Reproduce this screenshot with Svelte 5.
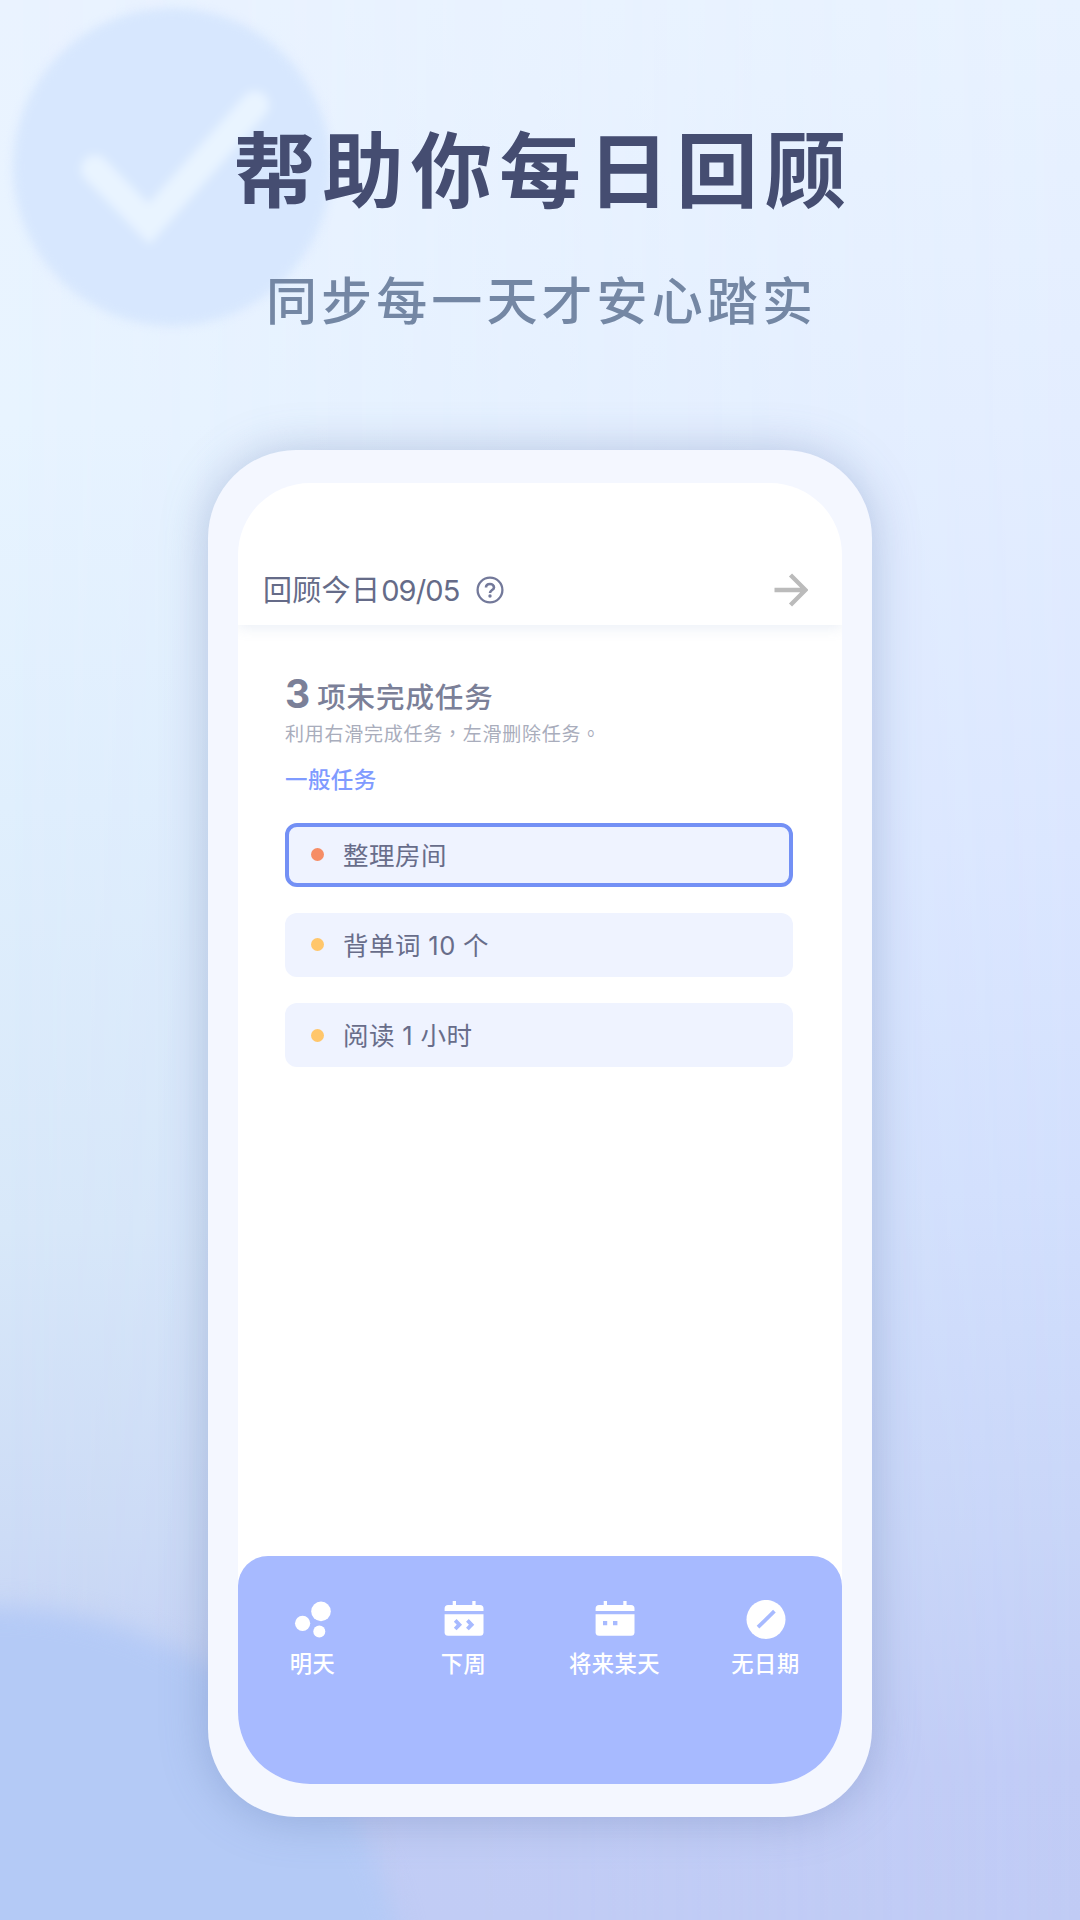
<script lang="ts">
  type Task = { title: string; color: string; active: boolean };

  const tasks: Task[] = [
    { title: "整理房间", color: "#f68d66", active: true },
    { title: "背单词 10 个", color: "#ffc66b", active: false },
    { title: "阅读 1 小时", color: "#ffc66b", active: false },
  ];

  const actions = [
    { icon: "tomorrow", label: "明天" },
    { icon: "week", label: "下周" },
    { icon: "someday", label: "将来某天" },
    { icon: "none", label: "无日期" },
  ];
</script>

<div class="page">
  <svg class="backdrop" viewBox="0 0 1080 1920" aria-hidden="true">
    <g class="badge">
      <circle cx="172" cy="167" r="159" fill="#d7e7fe" />
      <path d="M95 169L149 224L255 105" fill="none" stroke="#e9f4ff" stroke-width="28" stroke-linecap="round" />
    </g>
    <circle class="bubble" cx="-6" cy="2022" r="415" />
  </svg>

  <header class="hero">
    <h1>帮助你每日回顾</h1>
    <p>同步每一天才安心踏实</p>
  </header>

  <div class="phone">
    <div class="screen">
      <div class="topbar">
        <span class="today">回顾今日<span class="date">09/05</span></span>
        <svg class="help" viewBox="0 0 28 28">
          <circle cx="14" cy="14" r="12.4" fill="none" stroke="currentColor" stroke-width="2.3" />
          <path d="M10 11.6C10 9.3 11.8 8 14 8S18 9.4 18 11.4C18 14 14 14 14 17" fill="none" stroke="currentColor" stroke-width="2.6" />
          <circle cx="14" cy="20" r="1.7" fill="currentColor" />
        </svg>
        <svg class="next" viewBox="0 0 34 34">
          <path d="M0.5 17H30M16.5 2L31.5 17L16.5 32" fill="none" stroke="#bbbbbb" stroke-width="4.4" />
        </svg>
      </div>

      <main class="content">
        <h2><b>3</b><span>项未完成任务</span></h2>
        <p class="hint">利用右滑完成任务<i lang="zh-Hant">，</i>左滑删除任务<i lang="zh-Hant">。</i></p>
        <h3>一般任务</h3>
        <ul>
          {#each tasks as task}
            <li class:active={task.active}>
              <span class="dot" style="background: {task.color}"></span>
              <span class="title">{task.title}</span>
            </li>
          {/each}
        </ul>
      </main>

      <nav>
        {#each actions as action}
          <div class="action">
            <svg viewBox="0 0 40 40">
              {#if action.icon === "tomorrow"}
                <circle cx="28" cy="11.4" r="9.8" />
                <circle cx="9.6" cy="23.3" r="7.6" />
                <circle cx="26.3" cy="31.5" r="6" />
              {:else if action.icon === "none"}
                <circle cx="20" cy="19.4" r="19.5" />
                <path class="cut" d="M12 27.2L28.4 11.2" />
              {:else}
                <path d="M0.6 11V8.5Q0.6 5 4.1 5H8.7V1H12V5H28.3V1H31.6V5H36Q39.5 5 39.5 8.5V11Z" />
                <path d="M0.6 14.3H39.5V32.2Q39.5 35.7 36 35.7H4.1Q0.6 35.7 0.6 32.2Z" />
                {#if action.icon === "week"}
                  <path class="cut thin" d="M11.2 20.4L15.4 24.7L11.2 29M23.4 20.4L27.6 24.7L23.4 29" />
                {:else}
                  <path class="hole" d="M8 21H12.2V25.2H8ZM18 21H22.4V25.2H18Z" />
                {/if}
              {/if}
            </svg>
            <span>{action.label}</span>
          </div>
        {/each}
      </nav>
    </div>
  </div>
</div>

<style>
  :global(body) {
    margin: 0;
  }

  .page {
    position: relative;
    box-sizing: border-box;
    width: 1080px;
    height: 1920px;
    overflow: hidden;
    font-family: Inter, "Noto Sans CJK SC", sans-serif;
    background: linear-gradient(#eaf3ff 0%, #e8f4ff 22%, #e0effd 42%, #d8e8f9 64%, #cddcf6 80%, #c2cef5 93%, #c2cdf5 100%);
  }

  .page::before {
    content: "";
    position: absolute;
    inset: 0;
    background: linear-gradient(#e8f2ff 0%, #e3edff 22%, #dbe6ff 44%, #d2dffd 62%, #c8d5f8 80%, #c1ccf6 92%, #c0cbf5 100%);
    mask-image: linear-gradient(90deg, transparent, #000);
  }

  .backdrop {
    position: absolute;
    inset: 0;
  }

  .badge {
    filter: blur(5px);
  }

  .bubble {
    fill: #b4caf6;
    filter: blur(12px);
  }

  .hero {
    position: relative;
    height: 450px;
    text-align: center;
    font-family: "Noto Sans CJK SC", sans-serif;
  }

  h1 {
    margin: 0;
    padding: 107px 0 0 7px;
    font-size: 81.5px;
    line-height: 116px;
    font-weight: 700;
    letter-spacing: 7px;
    color: #454d71;
  }

  .hero p {
    margin: 0;
    padding: 39px 0 0 3px;
    font-size: 51px;
    line-height: 72px;
    font-weight: 500;
    letter-spacing: 4.1px;
    color: #7487a4;
  }

  .phone {
    position: relative;
    box-sizing: border-box;
    width: 664px;
    height: 1366.5px;
    margin: 0 auto;
    padding: 33px 30px;
    border-radius: 88px;
    background: #f4f7ff;
    box-shadow: 0 2px 46px rgba(90, 115, 170, 0.36);
  }

  .screen {
    display: flex;
    flex-direction: column;
    height: 1301px;
    border-radius: 72px;
    overflow: hidden;
    background: #fff;
  }

  .topbar {
    display: flex;
    align-items: center;
    box-sizing: border-box;
    height: 142px;
    padding: 71px 34px 0 25px;
    color: #73799a;
    box-shadow: 0 2px 14px rgba(110, 140, 190, 0.16);
  }

  .today {
    margin-top: -4px;
    font-size: 29px;
    letter-spacing: 0.3px;
    color: #656b88;
  }

  .date {
    margin-left: 1px;
    letter-spacing: -0.9px;
  }

  .help {
    width: 28px;
    height: 28px;
    margin-left: 17px;
  }

  .next {
    width: 34px;
    height: 34px;
    margin-left: auto;
  }

  .content {
    flex: 1;
    padding: 45px 49px 0 47px;
  }

  h2 {
    display: flex;
    align-items: baseline;
    gap: 7px;
    margin: 0;
    height: 48px;
    line-height: 48px;
    font-size: 28.5px;
    font-weight: 500;
    letter-spacing: 0.9px;
    color: #7b8098;
  }

  h2 b {
    font-size: 39px;
    font-weight: 700;
    letter-spacing: 0;
  }

  .hint {
    margin: 0;
    font-size: 19px;
    line-height: 30px;
    letter-spacing: 0.75px;
    color: #a9adbc;
  }

  .hint i {
    font-style: normal;
    font-family: "Noto Sans CJK TC", sans-serif;
  }

  h3 {
    margin: 14px 0 26.5px;
    font-size: 22.5px;
    line-height: 32px;
    font-weight: 500;
    letter-spacing: 0.4px;
    color: #7f9bff;
  }

  ul {
    display: grid;
    gap: 26px;
    margin: 0;
    padding: 0;
    list-style: none;
  }

  li {
    display: flex;
    align-items: center;
    gap: 20px;
    box-sizing: border-box;
    height: 64.3px;
    padding-left: 26px;
    border-radius: 12px;
    background: #eff3ff;
    font-size: 25.5px;
    letter-spacing: 0.5px;
    word-spacing: -0.4px;
    color: #686d8a;
  }

  li.active {
    padding-left: 22px;
    border: 4px solid #7390f5;
  }

  .dot {
    width: 13px;
    height: 13px;
    border-radius: 50%;
  }

  .title {
    margin: -3px 0 0 -1px;
  }

  nav {
    display: grid;
    grid-template-columns: repeat(4, 1fr);
    box-sizing: border-box;
    height: 228px;
    padding-top: 44px;
    border-radius: 30px 30px 0 0;
    background: #a7baff;
    color: #fff;
  }

  .action {
    display: flex;
    flex-direction: column;
    align-items: center;
    padding-right: 2px;
    font-size: 22.3px;
    line-height: 32px;
    letter-spacing: 0.5px;
    font-weight: 500;
  }

  .action svg {
    width: 40px;
    height: 40px;
    margin-bottom: 8px;
    fill: #fff;
  }

  .action .cut {
    fill: none;
    stroke: #a7baff;
    stroke-width: 3.8;
  }

  .action .hole {
    fill: #a7baff;
  }
</style>
